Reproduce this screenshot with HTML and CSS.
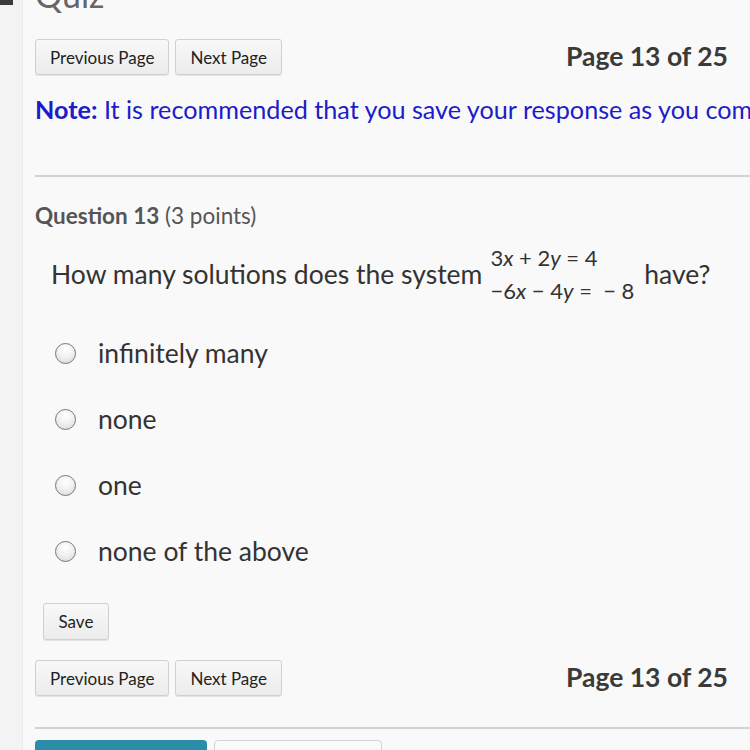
FILE: index.html
```html
<!DOCTYPE html>
<html>
<head>
<meta charset="utf-8">
<link rel="stylesheet" href="styles.css">
</head>
<body>
<div class="layout">
  <aside class="rail"><div class="rail-mark"></div></aside>
  <main class="content">
    <h1 class="title">Quiz</h1>
    <div class="nav-row">
      <div class="btns">
        <button class="btn">Previous Page</button>
        <button class="btn">Next Page</button>
      </div>
      <div class="page-count">Page 13 of 25</div>
    </div>
    <p class="note"><strong>Note:</strong> It is recommended that you save your response as you complete each question.</p>
    <hr class="rule rule-top">
    <h2 class="q-head"><strong>Question 13</strong> (3 points)</h2>
    <div class="q-text">
      <span>How many solutions does the system</span>
      <span class="system">
        <span class="eq">3<i>x</i> + 2<i>y</i> = 4</span>
        <span class="eq">−6<i>x</i> − 4<i>y</i> = &nbsp;− 8</span>
      </span>
      <span>have?</span>
    </div>
    <ul class="options">
      <li class="option"><span class="radio"></span><span>infinitely many</span></li>
      <li class="option"><span class="radio"></span><span>none</span></li>
      <li class="option"><span class="radio"></span><span>one</span></li>
      <li class="option"><span class="radio"></span><span>none of the above</span></li>
    </ul>
    <button class="btn btn-save">Save</button>
    <div class="nav-row nav-bottom">
      <div class="btns">
        <button class="btn">Previous Page</button>
        <button class="btn">Next Page</button>
      </div>
      <div class="page-count">Page 13 of 25</div>
    </div>
    <hr class="rule rule-bottom">
    <div class="footer-btns">
      <span class="fbtn fbtn-primary"></span>
      <span class="fbtn fbtn-plain"></span>
    </div>
  </main>
</div>
</body>
</html>
```
FILE: styles.css
```css
html, body {
  margin: 0;
  padding: 0;
  height: 750px;
  overflow: hidden;
}
body {
  background: #f9f9f9;
  font-family: Lato, "Open Sans", sans-serif;
  color: #333;
}
.layout {
  display: flex;
  min-height: 750px;
}
.rail {
  width: 22px;
  flex: none;
  background: #f3f3f3;
  border-right: 1px solid #ececec;
}
.rail-mark {
  width: 13px;
  height: 5px;
  background: #3a3a3a;
}
.content {
  flex: 1;
  padding-left: 12px;
  min-width: 0;
}
.title {
  margin: -22px 0 0;
  font-size: 34px;
  line-height: 34px;
  font-weight: 400;
  color: #666;
}
.nav-row {
  display: flex;
  align-items: center;
  justify-content: space-between;
  width: 693px;
  margin-top: 27px;
}
.btns {
  display: flex;
  gap: 6px;
}
.btn {
  font-family: Lato, sans-serif;
  font-size: 17px;
  color: #222;
  height: 36px;
  padding: 0 14px;
  border: 1px solid #d0d0d0;
  border-radius: 3px;
  background: linear-gradient(#f8f8f8, #ececec);
  box-shadow: 0 1px 0 #e4e4e4;
}
.page-count {
  font-size: 26.5px;
  font-weight: 700;
  color: #3a3a3a;
  margin-top: -2px;
}
.note {
  margin: 17px 0 0;
  font-size: 25.2px;
  line-height: 34px;
  color: #1c1cc8;
  white-space: nowrap;
}
.note strong {
  font-weight: 700;
}
.rule {
  border: 0;
  border-top: 2px solid #d2d2d2;
  margin: 0;
  width: 760px;
}
.rule-top {
  margin-top: 49px;
}
.q-head {
  margin: 26px 0 0;
  font-size: 22.5px;
  line-height: 26px;
  font-weight: 400;
  color: #555;
}
.q-head strong {
  font-weight: 700;
}
.q-text {
  display: flex;
  align-items: center;
  gap: 8px;
  margin: 11px 0 0 16px;
  font-size: 26.5px;
  color: #333;
}
.system {
  display: flex;
  flex-direction: column;
  font-size: 22px;
  line-height: 33px;
  padding-top: 1px;
  color: #333;
  margin-right: 2px;
}
.system i {
  font-style: italic;
}
.eq {
  white-space: pre;
}
.options {
  list-style: none;
  margin: 13px 0 0;
  padding: 0 0 0 20px;
}
.option {
  display: flex;
  align-items: center;
  height: 66px;
  font-size: 26.5px;
  color: #333;
}
.radio {
  width: 19px;
  height: 19px;
  border: 1.5px solid #767676;
  border-radius: 50%;
  background: radial-gradient(circle at 50% 30%, #ffffff 0%, #f2f2f2 45%, #d6d6d6 100%);
  margin-right: 22px;
  flex: none;
}
.btn-save {
  display: block;
  margin: 19px 0 0 8px;
  height: 37px;
  padding: 0 14.5px;
}
.nav-bottom {
  margin-top: 20px;
}
.rule-bottom {
  margin-top: 31px;
}
.footer-btns {
  display: flex;
  gap: 7px;
  margin-top: 11px;
}
.fbtn {
  display: block;
  width: 172px;
  height: 30px;
  border-radius: 4px;
}
.fbtn-primary {
  background: #2b8ca8;
}
.fbtn-plain {
  width: 166px;
  background: #fafafa;
  border: 1px solid #d4d4d4;
}
```
